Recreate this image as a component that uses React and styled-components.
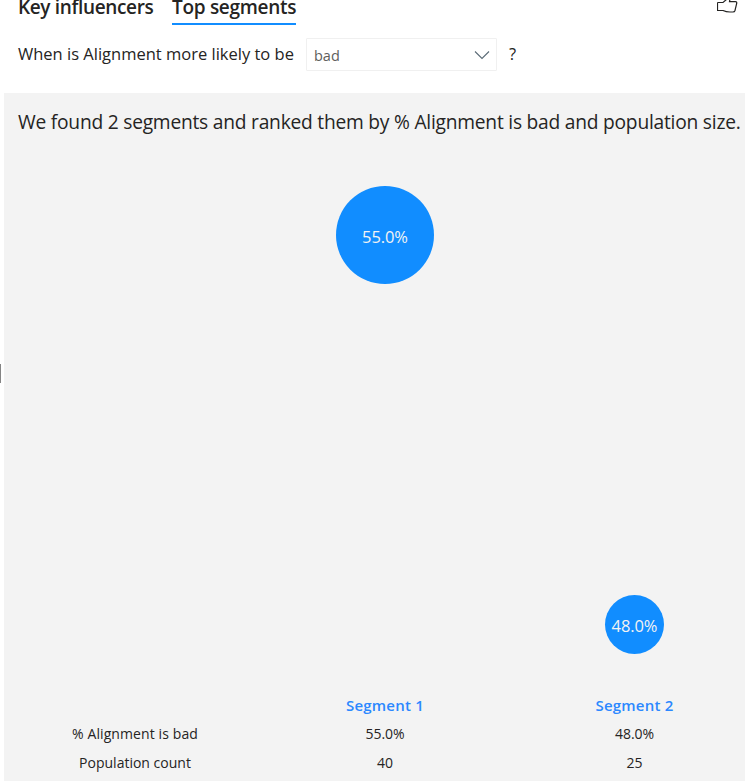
import React from "react";
import styled, { createGlobalStyle } from "styled-components";

const GlobalStyle = createGlobalStyle`
  * { box-sizing: border-box; }
  body {
    margin: 0;
    background: #fff;
    color: #252423;
    font-family: "Open Sans", "Noto Sans", sans-serif;
    font-weight: 400;
    overflow: hidden;
  }
`;

const Page = styled.main`
  width: 745px;
  height: 781px;
  overflow: hidden;
  display: flex;
  flex-direction: column;
`;

const TopBar = styled.header`
  height: 25px;
  flex: none;
  display: flex;
  justify-content: space-between;
  padding: 0 6px 0 18px;
`;

const Tabs = styled.nav`
  display: flex;
  gap: 19px;
`;

const Tab = styled.div`
  height: 25px;
  width: ${(p) => p.$width}px;
  display: flex;
  align-items: flex-end;
  white-space: nowrap;
  font-size: 19px;
  line-height: 26px;
  font-weight: 600;
  letter-spacing: ${(p) => p.$spacing}px;
  padding-bottom: ${(p) => (p.$active ? 3 : 5)}px;
  border-bottom: ${(p) => (p.$active ? "2px solid #118dff" : "0")};
`;

const LikeIcon = styled.svg`
  display: block;
  width: 22px;
  height: 14px;
`;

const Question = styled.section`
  height: 68px;
  flex: none;
  display: flex;
  align-items: flex-start;
  padding: 13px 0 0 18px;
  font-size: 16.5px;
  line-height: 32px;
  white-space: nowrap;
`;

const Prompt = styled.span`
  width: 288px;
`;

const Select = styled.div`
  width: 191px;
  height: 33px;
  margin-right: 12px;
  padding: 2px 6px 0 7px;
  border: 1px solid #f0f0f0;
  border-radius: 1px;
  display: flex;
  align-items: center;
  justify-content: space-between;
  font-size: 14.5px;
  color: #605e5c;
`;

const Chevron = styled.svg`
  width: 16px;
  height: 10px;
  margin-top: -1px;
`;

const Body = styled.div`
  flex: 1;
  display: flex;
`;

const Gutter = styled.div`
  width: 4px;
  flex: none;
  padding-top: 271px;
`;

const Handle = styled.div`
  width: 1px;
  height: 19px;
  background: #858585;
`;

const Panel = styled.section`
  flex: 1;
  min-width: 0;
  overflow: hidden;
  background: #f3f3f3;
  display: flex;
  flex-direction: column;
`;

const Heading = styled.h1`
  margin: 0;
  height: 58px;
  flex: none;
  padding-left: 14px;
  font-size: 19.2px;
  line-height: 58px;
  font-weight: 400;
  letter-spacing: -0.225px;
  white-space: nowrap;
`;

const Chart = styled.div`
  width: 749px;
  height: 540px;
  flex: none;
  margin-left: 6px;
  display: grid;
  grid-template-columns: 250px 250px 249px;
  justify-items: center;
`;

const Bubble = styled.div`
  grid-column: ${(p) => p.$column};
  grid-row: 1;
  width: ${(p) => p.$size}px;
  height: ${(p) => p.$size}px;
  margin-top: ${(p) => p.$top}px;
  border-radius: 50%;
  background: #118dff;
  color: #f3f3f3;
  display: flex;
  align-items: center;
  justify-content: center;
  font-size: 16.5px;
  padding-top: 2px;
  letter-spacing: -0.1px;
`;

const Table = styled.div`
  width: 749px;
  margin-left: 6px;
  display: grid;
  grid-template-columns: 250px 250px 249px;
  grid-template-rows: 28px 29px 28px;
  line-height: 29px;
  text-align: center;
  font-size: 14px;
  white-space: nowrap;
`;

const Cell = styled.div`
  letter-spacing: ${(p) => p.$spacing ?? 0}px;
`;

const SegmentName = styled(Cell)`
  font-size: 15px;
  line-height: 28px;
  font-weight: 600;
  letter-spacing: 0.2px;
  color: #2b88ff;
`;

export default function App() {
  return (
    <Page>
      <GlobalStyle />
      <TopBar>
        <Tabs>
          <Tab $width={135} $spacing={-0.35}>Key influencers</Tab>
          <Tab $width={124} $spacing={-0.3} $active>Top segments</Tab>
        </Tabs>
        <LikeIcon viewBox="0 0 22 14" fill="none" stroke="#252423" strokeWidth="1.2">
          <path d="M0.5 2.5H6L9.5 -0.5M0.5 2.5V10.5H6Q9 12 13 12H16Q17.6 12 18 10.5L19.7 3.5Q20 1.6 18.5 1.6H12.5L13 -1" />
        </LikeIcon>
      </TopBar>
      <Question>
        <Prompt>When is Alignment more likely to be</Prompt>
        <Select>
          bad
          <Chevron viewBox="0 0 16 10" fill="none" stroke="#5b6b76" strokeWidth="1.1">
            <path d="M1 1.5L8 8.5L15 1.5" />
          </Chevron>
        </Select>
        <span>?</span>
      </Question>
      <Body>
        <Gutter><Handle /></Gutter>
        <Panel>
          <Heading>We found 2 segments and ranked them by % Alignment is bad and population size.</Heading>
          <Chart>
            <Bubble $column={2} $size={98} $top={35}>55.0%</Bubble>
            <Bubble $column={3} $size={59} $top={444}>48.0%</Bubble>
          </Chart>
          <Table>
            <Cell />
            <SegmentName>Segment 1</SegmentName>
            <SegmentName>Segment 2</SegmentName>
            <Cell $spacing={0.1}>% Alignment is bad</Cell>
            <Cell $spacing={-0.1}>55.0%</Cell>
            <Cell $spacing={-0.1}>48.0%</Cell>
            <Cell>Population count</Cell>
            <Cell>40</Cell>
            <Cell>25</Cell>
          </Table>
        </Panel>
      </Body>
    </Page>
  );
}
